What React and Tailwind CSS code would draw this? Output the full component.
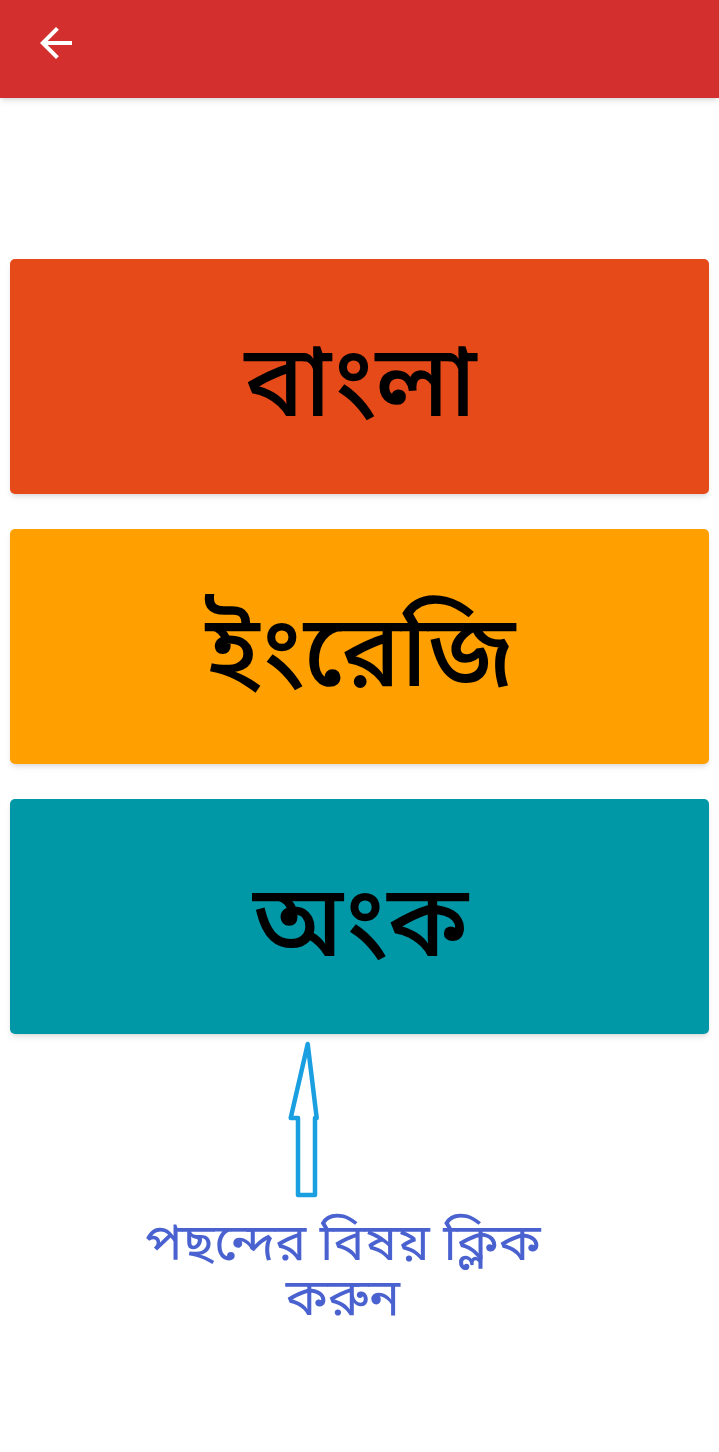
import React from 'react';

const subjects = [
  { name: 'বাংলা', color: 'bg-[#e64a19]' },
  { name: 'ইংরেজি', color: 'bg-[#ffa000]' },
  { name: 'অংক', color: 'bg-[#0097a7]' },
];

// hollow arrow pointing up at the last card, head leans left
const UpArrow = () => (
  <svg width="32" height="158" viewBox="0 0 32 158" fill="none">
    <path
      d="M19.7 3 L28.7 77 L27 77 L27 154 L10 154 L10 77 L2.7 77 Z"
      stroke="#1a9fe0"
      strokeWidth="4.5"
      strokeLinejoin="round"
    />
  </svg>
);

export default function App() {
  return (
    <div
      className="w-[719px] h-[1452px] bg-white"
      style={{ fontFamily: '"Noto Sans Bengali", "Noto Sans", "Liberation Sans", sans-serif' }}
    >
      <div className="h-[98px] bg-[#d32f2f] pl-[32px] pt-[19px] shadow-md">
        <svg width="48" height="48" viewBox="0 0 24 24" fill="white">
          <path d="M20 11H7.83l5.59-5.59L12 4l-8 8 8 8 1.41-1.41L7.83 13H20v-2z" />
        </svg>
      </div>

      <div className="flex flex-col gap-[35px] px-[10px] pt-[161px]">
        {subjects.map((s) => (
          <button
            key={s.name}
            className={`${s.color} h-[235px] rounded-[5px] shadow-md flex items-center justify-center text-black text-[100px] font-medium leading-none`}
          >
            <span className="pl-[2px] pt-[28px]">{s.name}</span>
          </button>
        ))}
      </div>

      <div className="ml-[288px] mt-[7px]">
        <UpArrow />
      </div>

      <div className="w-[420px] ml-[133px] mt-[20px]">
        <p className="text-center text-[52px] leading-[55px] text-[#4a62d0]">
          পছন্দের বিষয় ক্লিক করুন
        </p>
      </div>
    </div>
  );
}
